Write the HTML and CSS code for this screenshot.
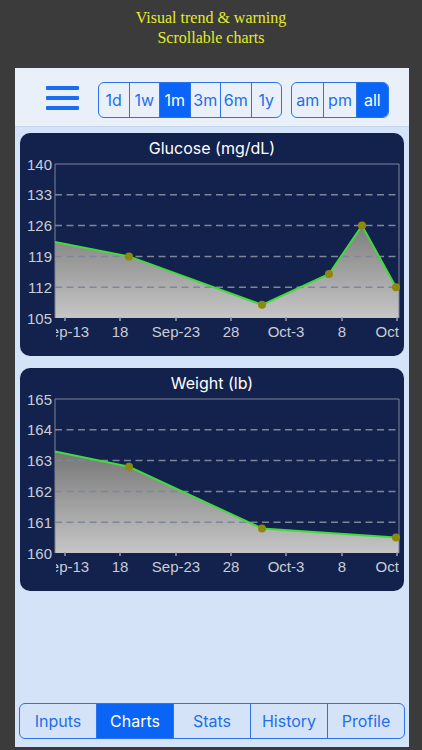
FILE: index.html
```html
<!DOCTYPE html>
<html lang="en">
<head>
  <meta charset="UTF-8">
  <meta name="viewport" content="width=device-width, initial-scale=1.0">
  <title>Charts</title>
  <link rel="stylesheet" href="styles.css">
</head>
<body>
  <div class="caption">
    <p>Visual trend &amp; warning</p>
    <p>Scrollable charts</p>
  </div>

  <div class="screen">
    <div class="toolbar">
      <div class="menu">
        <span></span><span></span><span></span>
      </div>
      <div class="segments range">
        <span>1d</span><span>1w</span><span class="active">1m</span><span>3m</span><span>6m</span><span>1y</span>
      </div>
      <div class="segments time">
        <span>am</span><span>pm</span><span class="active">all</span>
      </div>
    </div>

    <div class="content">
      <div class="card">
        <div class="card-title">Glucose (mg/dL)</div>
        <svg class="plot" width="384" height="195" viewBox="0 0 384 195">
          <defs>
            <linearGradient id="fill1" x1="0" y1="40" x2="0" y2="157" gradientUnits="userSpaceOnUse">
              <stop offset="0" stop-color="#6a6a6a"/>
              <stop offset="1" stop-color="#c6c6c6"/>
            </linearGradient>
            <clipPath id="clip1"><rect x="36" y="0" width="343" height="195"/></clipPath>
          </defs>
          <polygon fill="url(#fill1)" points="35,81 109,95.4 242,143.8 309,113 342,64.6 376,126.2 379,126.2 379,157 35,157"/>
          <g class="grid">
            <line x1="35" y1="33.8" x2="376" y2="33.8"/>
            <line x1="35" y1="64.6" x2="376" y2="64.6"/>
            <line x1="35" y1="95.4" x2="376" y2="95.4"/>
            <line x1="35" y1="126.2" x2="376" y2="126.2"/>
          </g>
          <polyline class="frame" points="35,157 35,3 379,3 379,157"/>
          <g class="ticks">
            <line x1="45" y1="156" x2="45" y2="160"/>
            <line x1="100" y1="156" x2="100" y2="160"/>
            <line x1="156" y1="156" x2="156" y2="160"/>
            <line x1="211" y1="156" x2="211" y2="160"/>
            <line x1="266" y1="156" x2="266" y2="160"/>
            <line x1="322" y1="156" x2="322" y2="160"/>
            <line x1="377" y1="156" x2="377" y2="160"/>
          </g>
          <polyline class="trend" points="35,81 109,95.4 242,143.8 309,113 342,64.6 376,126.2"/>
          <g class="dots">
            <circle cx="109" cy="95.4" r="4"/>
            <circle cx="242" cy="143.8" r="4"/>
            <circle cx="309" cy="113" r="4"/>
            <circle cx="342" cy="64.6" r="4"/>
            <circle cx="376" cy="126.2" r="4"/>
          </g>
          <g class="ylabels">
            <text x="32" y="8.5">140</text>
            <text x="32" y="39.3">133</text>
            <text x="32" y="70.1">126</text>
            <text x="32" y="100.9">119</text>
            <text x="32" y="131.7">112</text>
            <text x="32" y="162.5">105</text>
          </g>
          <g class="xlabels" clip-path="url(#clip1)">
            <text x="45" y="176">Sep-13</text>
            <text x="100" y="176">18</text>
            <text x="156" y="176">Sep-23</text>
            <text x="211" y="176">28</text>
            <text x="266" y="176">Oct-3</text>
            <text x="322" y="176">8</text>
            <text x="378" y="176">Oct-13</text>
          </g>
        </svg>
      </div>

      <div class="card">
        <div class="card-title">Weight (lb)</div>
        <svg class="plot" width="384" height="195" viewBox="0 0 384 195">
          <defs>
            <linearGradient id="fill2" x1="0" y1="40" x2="0" y2="157" gradientUnits="userSpaceOnUse">
              <stop offset="0" stop-color="#6a6a6a"/>
              <stop offset="1" stop-color="#c6c6c6"/>
            </linearGradient>
            <clipPath id="clip2"><rect x="36" y="0" width="343" height="195"/></clipPath>
          </defs>
          <polygon fill="url(#fill2)" points="35,55.4 109,70.8 242,132.4 376,141.6 379,141.6 379,157 35,157"/>
          <g class="grid">
            <line x1="35" y1="33.8" x2="376" y2="33.8"/>
            <line x1="35" y1="64.6" x2="376" y2="64.6"/>
            <line x1="35" y1="95.4" x2="376" y2="95.4"/>
            <line x1="35" y1="126.2" x2="376" y2="126.2"/>
          </g>
          <polyline class="frame" points="35,157 35,3 379,3 379,157"/>
          <g class="ticks">
            <line x1="45" y1="156" x2="45" y2="160"/>
            <line x1="100" y1="156" x2="100" y2="160"/>
            <line x1="156" y1="156" x2="156" y2="160"/>
            <line x1="211" y1="156" x2="211" y2="160"/>
            <line x1="266" y1="156" x2="266" y2="160"/>
            <line x1="322" y1="156" x2="322" y2="160"/>
            <line x1="377" y1="156" x2="377" y2="160"/>
          </g>
          <polyline class="trend" points="35,55.4 109,70.8 242,132.4 376,141.6"/>
          <g class="dots">
            <circle cx="109" cy="70.8" r="4"/>
            <circle cx="242" cy="132.4" r="4"/>
            <circle cx="376" cy="141.6" r="4"/>
          </g>
          <g class="ylabels">
            <text x="32" y="8.5">165</text>
            <text x="32" y="39.3">164</text>
            <text x="32" y="70.1">163</text>
            <text x="32" y="100.9">162</text>
            <text x="32" y="131.7">161</text>
            <text x="32" y="162.5">160</text>
          </g>
          <g class="xlabels" clip-path="url(#clip2)">
            <text x="45" y="176">Sep-13</text>
            <text x="100" y="176">18</text>
            <text x="156" y="176">Sep-23</text>
            <text x="211" y="176">28</text>
            <text x="266" y="176">Oct-3</text>
            <text x="322" y="176">8</text>
            <text x="378" y="176">Oct-13</text>
          </g>
        </svg>
      </div>
    </div>

    <div class="tabs">
      <span>Inputs</span><span class="active">Charts</span><span>Stats</span><span>History</span><span>Profile</span>
    </div>
  </div>
</body>
</html>
```

FILE: styles.css
```css
* {
  margin: 0;
  padding: 0;
  box-sizing: border-box;
}

body {
  background: #3b3b3b;
  font-family: Inter, "Liberation Sans", sans-serif;
  width: 422px;
  height: 750px;
  overflow: hidden;
}

.caption {
  padding-top: 8px;
  height: 68px;
  text-align: center;
  color: #e3ec2c;
  font-family: "Liberation Serif", serif;
  font-size: 16px;
  line-height: 20px;
}

.screen {
  display: flex;
  flex-direction: column;
  margin-left: 15px;
  width: 394px;
  height: 679px;
  background: #d4e3f7;
}

.toolbar {
  display: flex;
  align-items: center;
  height: 59px;
  padding-top: 5px;
  background: #e9f0fa;
  border-bottom: 1px solid #c4d5ec;
}

.menu {
  display: flex;
  flex-direction: column;
  gap: 6px;
  width: 33px;
  margin: 0 19px 4px 31px;
}

.menu span {
  display: block;
  height: 4px;
  border-radius: 1px;
  background: #1a6df2;
}

.segments {
  display: flex;
  height: 36px;
  border: 1.5px solid #2a73e8;
  border-radius: 6px;
  overflow: hidden;
}

.segments span {
  flex: 1;
  display: flex;
  align-items: center;
  justify-content: center;
  color: #1f6fe8;
  font-size: 16px;
  border-left: 1px solid #2a73e8;
}

.segments span:first-child {
  border-left: none;
}

.segments .active,
.tabs .active {
  background: #0a64f6;
  color: #ffffff;
}

.range {
  width: 184px;
}

.time {
  width: 98px;
  margin-left: 9px;
}

.content {
  flex: 1;
  display: flex;
  flex-direction: column;
  gap: 12px;
  padding: 6px 5px 0;
}

.card {
  height: 223px;
  background: #13214d;
  border-radius: 10px;
}

.card-title {
  height: 28px;
  line-height: 30px;
  text-align: center;
  color: #ffffff;
  font-size: 16px;
}

.plot {
  display: block;
  overflow: visible;
}

.plot text {
  font-family: "Liberation Sans", Arial, sans-serif;
  font-size: 15px;
  fill: #c9cdd6;
}

.ylabels text {
  text-anchor: end;
}

.xlabels text {
  text-anchor: middle;
}

.grid line {
  stroke: #7e8699;
  stroke-width: 1.5;
  stroke-dasharray: 7 4.5;
}

.frame {
  fill: none;
  stroke: #7c8498;
  stroke-width: 1;
}

.ticks line {
  stroke: #9aa0ae;
  stroke-width: 1.5;
}

.trend {
  fill: none;
  stroke: #3fdc3a;
  stroke-width: 2;
}

.dots circle {
  fill: #8c8a0c;
}

.tabs {
  display: flex;
  height: 36px;
  margin: 0 4px 8px;
  border: 1.5px solid #2a73e8;
  border-radius: 6px;
  overflow: hidden;
}

.tabs span {
  flex: 1;
  display: flex;
  align-items: center;
  justify-content: center;
  color: #1f6fe8;
  font-size: 16px;
  border-left: 1px solid #2a73e8;
}

.tabs span:first-child {
  border-left: none;
}
```
